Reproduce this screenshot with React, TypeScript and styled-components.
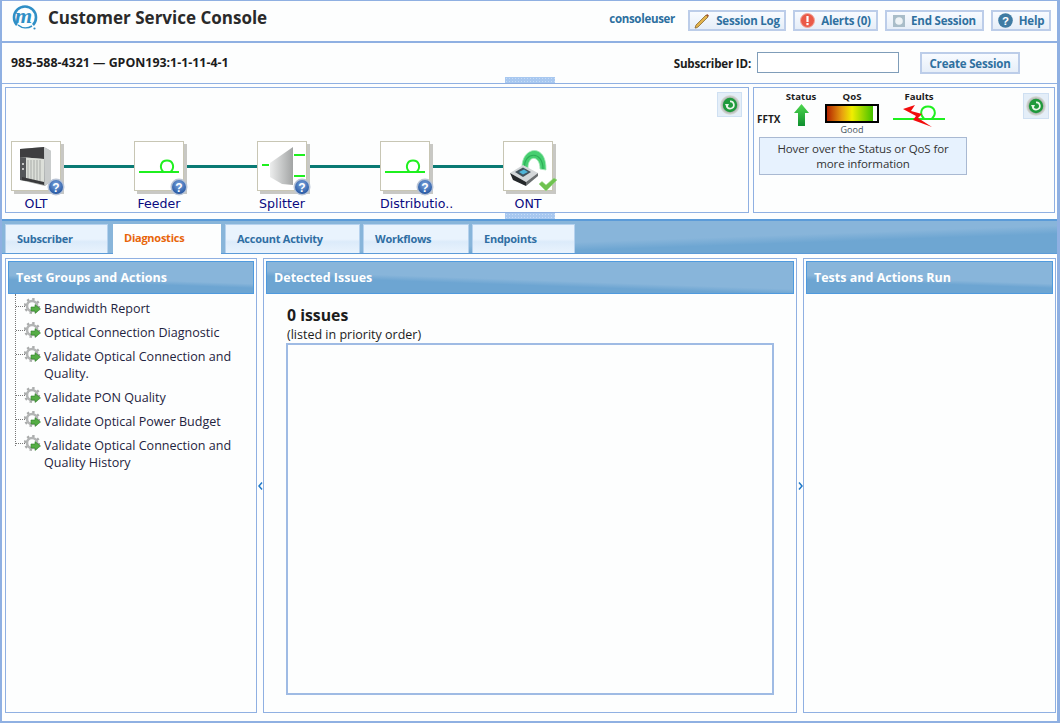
import React from 'react';
import styled, { createGlobalStyle } from 'styled-components';

const GlobalStyle = createGlobalStyle`
  html, body { margin: 0; padding: 0; background: #fdfefe; }
  body { font-family: "Open Sans", "Noto Sans", "Liberation Sans", sans-serif; }
  * { box-sizing: border-box; }
`;

const BLUE = '#8fb0e2';

const Loop = () => (
  <svg width="42" height="20" viewBox="0 0 42 20" fill="none" stroke="#1ff01f" strokeWidth="2">
    <path d="M1 16 H41" />
    <path d="M25 15.5 C21 11 23 4.5 29 4.5 C35 4.5 37 11 33 15.5" />
  </svg>
);

const HelpBadge = ({ id }: { id: string }) => (
  <svg width="18" height="18" viewBox="0 0 18 18">
    <defs>
      <radialGradient id={id} cx="0.5" cy="0.35" r="0.7">
        <stop offset="0" stopColor="#7fa8e0" />
        <stop offset="1" stopColor="#1d4f9c" />
      </radialGradient>
    </defs>
    <circle cx="9" cy="9" r="8.5" fill="#b9c4d6" />
    <circle cx="9" cy="9" r="7" fill={`url(#${id})`} />
    <text x="9" y="13.5" textAnchor="middle" fontSize="12" fontWeight="700" fill="#fff" fontFamily="Liberation Sans, sans-serif">?</text>
  </svg>
);

const CheckBadge = () => (
  <svg width="20" height="16" viewBox="0 0 20 16">
    <path d="M1 7 L4 4.5 L8 8 L16 1 L19 3 L8 14 Z" fill="#6fc24f" stroke="#9ad98a" strokeWidth="0.6" />
  </svg>
);

const OltIcon = () => (
  <svg width="34" height="44" viewBox="0 0 34 44">
    <path d="M1 5 L25 3 L32 7 V37 L26 42 L1 36 Z" fill="#a9adad" />
    <path d="M25 3 L32 7 V37 L26 42 Z" fill="#c9cccc" />
    <path d="M1 5 L25 3 V15 L1 13 Z" fill="#3e3e40" />
    <path d="M1 13 L25 15 V41 L1 36 Z" fill="#dcdfd9" />
    <path d="M1 13 L7 13.6 V37 L1 36 Z" fill="#55575a" />
    {[9, 12, 15, 18, 21].map((x) => (
      <path key={x} d={`M${x} 16 V37`} stroke="#a8aba8" strokeWidth="1" />
    ))}
    <path d="M3 33 L25 38 V41 L3 36 Z" fill="#3a3a3c" />
    <circle cx="4" cy="20" r="1" fill="#e8e8e8" />
    <circle cx="4" cy="25" r="1" fill="#e8e8e8" />
  </svg>
);

const SplitterIcon = () => (
  <svg width="46" height="44" viewBox="0 0 46 44">
    <defs>
      <linearGradient id="splitterBody" x1="0" x2="1" y1="0" y2="0">
        <stop offset="0" stopColor="#eceded" />
        <stop offset="1" stopColor="#a2a4a4" />
      </linearGradient>
    </defs>
    <path d="M3 21 H10" stroke="#1ff01f" strokeWidth="2" />
    <path d="M11 19 L34 3 V41 L23 40 L11 33 Z" fill="url(#splitterBody)" />
    <path d="M35 11 H46 M35 32 H46" stroke="#1ff01f" strokeWidth="2" />
  </svg>
);

const OntIcon = () => (
  <svg width="46" height="42" viewBox="0 0 46 42">
    <path d="M17 25 C15 1 42 -3 41 25 L35 24 C35 10 23 10 23 23 Z" fill="#46cf70" stroke="#a4e6b6" strokeWidth="0.8" />
    <path d="M19.5 22 C19 7 38 5 38 24" fill="none" stroke="#2fae58" strokeWidth="1.2" />
    <path d="M5 28 L18 20 L33 28 L21 37 Z" fill="#d4d7d9" />
    <path d="M5 28 L21 37 V41 L8 35 Z" fill="#25282b" />
    <path d="M21 37 L33 28 V31 L21 41 Z" fill="#6a6e70" />
    <path d="M10 27 L18 22.5 L26 27 L18 32 Z" fill="#43525c" />
    <path d="M14 27 L19 24.5 L23 27 L18 29.5 Z" fill="#4fb5d8" />
  </svg>
);

const Refresh = () => (
  <svg width="20" height="20" viewBox="0 0 20 20">
    <defs>
      <radialGradient id="refreshRing">
        <stop offset="0.6" stopColor="#9aa09c" />
        <stop offset="1" stopColor="#dfe2e0" />
      </radialGradient>
    </defs>
    <circle cx="10" cy="10" r="10" fill="url(#refreshRing)" />
    <circle cx="10" cy="10" r="7.2" fill="#1f9a3c" />
    <path d="M6.8 11 A3.6 3.6 0 1 0 10 6.4" fill="none" stroke="#eaf6ea" strokeWidth="1.7" />
    <path d="M5 9 L9 9 L7 13 Z" fill="#eaf6ea" />
  </svg>
);

const Gear = () => (
  <svg width="17" height="17" viewBox="0 0 17 17">
    <circle cx="8" cy="8" r="5" fill="none" stroke="#b3b5b5" strokeWidth="2.6" />
    <circle cx="8" cy="8" r="7" fill="none" stroke="#a9abab" strokeWidth="2.2" strokeDasharray="2.4 3.1" />
    <path d="M7 9 H11 V6.6 L16.5 11 L11 15.4 V13 H7 Z" fill="#55ad45" stroke="#2f7d2a" strokeWidth="0.6" />
  </svg>
);

const Pencil = () => (
  <svg width="16" height="16" viewBox="0 0 16 16">
    <path d="M2 15 L1 15 L2 12 L12 2 L14 4 L4 14 Z" fill="#e2b34c" stroke="#7d5a1f" strokeWidth="0.7" />
    <path d="M12 2 L13.2 1 L15 2.8 L14 4 Z" fill="#a0522d" />
  </svg>
);

const AlertIcon = () => (
  <svg width="15" height="15" viewBox="0 0 15 15">
    <circle cx="7.5" cy="7.5" r="7" fill="#ea5a48" stroke="#f2a79b" />
    <rect x="6.4" y="3" width="2.2" height="6" fill="#fff" />
    <rect x="6.4" y="10" width="2.2" height="2.2" fill="#fff" />
  </svg>
);

const EndIcon = () => (
  <svg width="12" height="12" viewBox="0 0 12 12">
    <rect width="12" height="12" fill="#a9bdc9" />
    <circle cx="6" cy="6" r="3.8" fill="#eef3f6" />
  </svg>
);

const HelpIcon = () => (
  <svg width="15" height="15" viewBox="0 0 15 15">
    <circle cx="7.5" cy="7.5" r="7.3" fill="#3f7ba3" />
    <text x="7.5" y="11.7" textAnchor="middle" fontSize="11.5" fontWeight="700" fill="#fff" fontFamily="Liberation Sans, sans-serif">?</text>
  </svg>
);

const UpArrow = () => (
  <svg width="15" height="22" viewBox="0 0 15 22">
    <defs>
      <linearGradient id="upArrow" x1="0" x2="0" y1="0" y2="1">
        <stop offset="0" stopColor="#4fd84f" />
        <stop offset="1" stopColor="#0f8f2f" />
      </linearGradient>
    </defs>
    <path d="M7.5 0 L15 9 H11 V22 H4 V9 H0 Z" fill="url(#upArrow)" />
  </svg>
);

const FaultIcon = () => (
  <svg width="52" height="24" viewBox="0 0 52 24" fill="none">
    <path d="M0 15 H52" stroke="#1ff01f" strokeWidth="2" />
    <path d="M31 14.5 C26 10 28 2.5 35 2.5 C42 2.5 44 10 39 14.5" stroke="#1ff01f" strokeWidth="2" />
    <path d="M10 5 L22 1 L18 7 L29 10 L25 14 L39 23 L20 16 L23 12 Z" fill="#f20d0d" />
  </svg>
);

const Logo = () => (
  <LogoBox>
    <svg width="26" height="26" viewBox="0 0 26 26">
      <path d="M5 21 A11 11 0 1 1 21 21" fill="none" stroke="#2f8fc6" strokeWidth="2.6" />
      <path d="M6 21 A12 12 0 0 0 20 22" fill="none" stroke="#2f8fc6" strokeWidth="1.6" />
      <circle cx="22.5" cy="24.5" r="1.1" fill="#2f8fc6" />
    </svg>
    <LogoLetter>m</LogoLetter>
  </LogoBox>
);

const nodes = [
  { name: 'OLT', art: <OltIcon />, badge: 'help' },
  { name: 'Feeder', art: <Loop />, badge: 'help' },
  { name: 'Splitter', art: <SplitterIcon />, badge: 'help' },
  { name: 'Distributio..', art: <Loop />, badge: 'help' },
  { name: 'ONT', art: <OntIcon />, badge: 'ok' },
];

const testActions = [
  'Bandwidth Report',
  'Optical Connection Diagnostic',
  'Validate Optical Connection and Quality.',
  'Validate PON Quality',
  'Validate Optical Power Budget',
  'Validate Optical Connection and Quality History',
];

const tabs = [
  { name: 'Subscriber', width: 103, gap: 0 },
  { name: 'Diagnostics', width: 108, gap: 5, active: true },
  { name: 'Account Activity', width: 135, gap: 4 },
  { name: 'Workflows', width: 106, gap: 3 },
  { name: 'Endpoints', width: 103, gap: 3 },
];

const App: React.FC = () => {
  return (
    <Page>
      <GlobalStyle />
      <Header>
        <Logo />
        <Title>Customer Service Console</Title>
        <UserName>consoleuser</UserName>
        <HeaderButton $width={98}><Pencil />Session Log</HeaderButton>
        <HeaderButton $width={85}><AlertIcon />Alerts (0)</HeaderButton>
        <HeaderButton $width={99}><EndIcon />End Session</HeaderButton>
        <HeaderButton $width={60}><HelpIcon />Help</HeaderButton>
      </Header>

      <SubscriberBar>
        <CircuitText>985-588-4321 — GPON193:1-1-11-4-1</CircuitText>
        <SubscriberLabel>Subscriber ID:</SubscriberLabel>
        <SubscriberInput />
        <CreateButton>Create Session</CreateButton>
        <GripBottom />
      </SubscriberBar>

      <MapArea>
        <MapPanel>
          <RefreshRow>
            <RefreshButton><Refresh /></RefreshButton>
          </RefreshRow>
          <NodeRow>
            {nodes.map((n, i) => (
              <React.Fragment key={n.name}>
                {i > 0 && <Connector />}
                <Node>
                  <NodeCard>
                    {n.art}
                    <NodeBadge $ok={n.badge === 'ok'}>
                      {n.badge === 'ok' ? <CheckBadge /> : <HelpBadge id={`badge${i}`} />}
                    </NodeBadge>
                  </NodeCard>
                  <NodeLabel>{n.name}</NodeLabel>
                </Node>
              </React.Fragment>
            ))}
          </NodeRow>
        </MapPanel>
        <StatusPanel>
          <StatusSummary>
            <StatusRow>
              <Fftx>FFTX</Fftx>
              <StatusColumn $width={44} $after={2}>
                <StatusHead>Status</StatusHead>
                <UpArrow />
              </StatusColumn>
              <StatusColumn $width={54} $after={14}>
                <StatusHead>QoS</StatusHead>
                <QosBar />
                <QosText>Good</QosText>
              </StatusColumn>
              <StatusColumn $width={52} $after={0}>
                <StatusHead>Faults</StatusHead>
                <FaultIcon />
              </StatusColumn>
            </StatusRow>
            <HoverHint>Hover over the Status or QoS for more information</HoverHint>
          </StatusSummary>
          <RefreshButton $large><Refresh /></RefreshButton>
        </StatusPanel>
        <GripBottom />
      </MapArea>

      <TabStrip>
        {tabs.map((t) => (
          <Tab key={t.name} $width={t.width} $gap={t.gap} $active={t.active}>{t.name}</Tab>
        ))}
      </TabStrip>

      <Columns>
        <Panel $width={252}>
          <PanelHead>Test Groups and Actions</PanelHead>
          <Tree>
            {testActions.map((a) => (
              <TreeItem key={a}>
                <TreeIcon><Gear /></TreeIcon>
                <span>{a}</span>
              </TreeItem>
            ))}
          </Tree>
        </Panel>
        <Gutter>
          <svg width="5" height="8" viewBox="0 0 5 8"><path d="M4 0.5 L1 4 L4 7.5" fill="none" stroke="#1f78c8" strokeWidth="1.5" /></svg>
        </Gutter>
        <CenterPanel>
          <PanelHead>Detected Issues</PanelHead>
          <IssuesBody>
            <IssueCount>0 issues</IssueCount>
            <IssueNote>(listed in priority order)</IssueNote>
            <IssueList />
          </IssuesBody>
        </CenterPanel>
        <Gutter>
          <svg width="5" height="8" viewBox="0 0 5 8"><path d="M1 0.5 L4 4 L1 7.5" fill="none" stroke="#1f78c8" strokeWidth="1.5" /></svg>
        </Gutter>
        <Panel $width={253}>
          <PanelHead>Tests and Actions Run</PanelHead>
        </Panel>
      </Columns>
    </Page>
  );
};

export default App;

const Page = styled.div`
  width: 1060px;
  height: 723px;
  display: flex;
  flex-direction: column;
  overflow: hidden;
  color: #1c1c1c;
  background: #fdfefe;
  border-style: solid;
  border-color: ${BLUE};
  border-width: 1px 3px 2px 2px;
`;

const Header = styled.div`
  height: 42px;
  flex: none;
  display: flex;
  align-items: flex-start;
  padding: 0 6px 0 10px;
  border-bottom: 2px solid ${BLUE};
`;

const LogoBox = styled.div`
  position: relative;
  width: 26px;
  height: 26px;
  margin: 3px 10px 0 0;
`;

const LogoLetter = styled.span`
  position: absolute;
  left: 3px;
  top: -1px;
  font: italic 700 22px "Liberation Serif", serif;
  color: #2f8fc6;
`;

const Title = styled.div`
  flex: 1;
  margin-top: 5px;
  font-size: 17px;
  line-height: 24px;
  font-weight: 700;
  color: #2a2a2a;
`;

const UserName = styled.div`
  margin: 9px 6px 0 0;
  font-size: 11.5px;
  line-height: 18px;
  letter-spacing: -0.3px;
  font-weight: 700;
  color: #2c6f9f;
`;

const HeaderButton = styled.div<{ $width: number }>`
  width: ${(p) => p.$width}px;
  height: 21px;
  margin: 9px 0 0 7px;
  display: flex;
  align-items: center;
  justify-content: center;
  gap: 6px;
  border: 2px solid #bccde9;
  background: linear-gradient(#f8fbff, #e6eef8);
  font-size: 11.5px;
  letter-spacing: -0.2px;
  font-weight: 700;
  color: #2f709f;
`;

const SubscriberBar = styled.div`
  position: relative;
  height: 41px;
  flex: none;
  display: flex;
  align-items: flex-start;
  padding: 9px 37px 0 9px;
  border-bottom: 1px solid ${BLUE};
`;

const CircuitText = styled.div`
  flex: 1;
  margin-top: 1px;
  font-size: 12.4px;
  font-weight: 700;
  line-height: 20px;
`;

const SubscriberLabel = styled.div`
  margin: 3px 6px 0 0;
  font-size: 11.6px;
  letter-spacing: -0.2px;
  font-weight: 700;
  line-height: 18px;
`;

const SubscriberInput = styled.div`
  width: 142px;
  height: 21px;
  border: 1px solid #7f9db9;
  background: #fff;
`;

const CreateButton = styled.div`
  width: 100px;
  height: 22px;
  margin-left: 21px;
  border: 2px solid #bccde9;
  background: linear-gradient(#f8fbff, #e6eef8);
  font-size: 11.5px;
  letter-spacing: -0.2px;
  font-weight: 700;
  color: #2f709f;
  display: flex;
  align-items: center;
  justify-content: center;
`;

const GripBottom = styled.div`
  position: absolute;
  left: 503px;
  bottom: 0;
  width: 50px;
  height: 6px;
  background-color: #a8c8f0;
  background-image: radial-gradient(#c6dcf6 1px, transparent 1px);
  background-size: 3px 3px;
`;

const MapArea = styled.div`
  position: relative;
  height: 137px;
  flex: none;
  display: flex;
  gap: 4px;
  padding: 3px 2px 0 3px;
  border-bottom: 2px solid #5b9bd8;
`;

const MapPanel = styled.div`
  width: 744px;
  height: 126px;
  border: 1px solid ${BLUE};
  padding: 4px 6px 0 5px;
`;

const RefreshRow = styled.div`
  display: flex;
  justify-content: flex-end;
`;

const RefreshButton = styled.div<{ $large?: boolean }>`
  width: ${(p) => (p.$large ? 26 : 25)}px;
  height: ${(p) => (p.$large ? 26 : 25)}px;
  flex: none;
  display: flex;
  align-items: center;
  justify-content: center;
  background: #e4eef8;
  border: 1px solid #cfe0f2;
  margin-top: ${(p) => (p.$large ? 2 : 0)}px;
`;

const NodeRow = styled.div`
  display: flex;
  align-items: flex-start;
  margin-top: 24px;
`;

const Node = styled.div`
  width: 50px;
  flex: none;
  display: flex;
  flex-direction: column;
  align-items: center;
`;

const NodeCard = styled.div`
  position: relative;
  width: 50px;
  height: 50px;
  display: flex;
  align-items: center;
  justify-content: center;
  background: #fff;
  border: 1px solid #c8c6b4;
  box-shadow: 3px 3px 0 #c8c8c4;
`;

const NodeBadge = styled.div<{ $ok?: boolean }>`
  position: absolute;
  right: ${(p) => (p.$ok ? -6 : -5)}px;
  bottom: ${(p) => (p.$ok ? -3 : -6)}px;
  display: flex;
`;

const NodeLabel = styled.div`
  margin-top: 5px;
  font: 12.6px "DejaVu Sans", sans-serif;
  color: #0a0a80;
  white-space: nowrap;
  line-height: 16px;
  display: flex;
  justify-content: safe center;
  width: 50px;
`;

const Connector = styled.div`
  width: 70px;
  height: 3px;
  flex: none;
  margin: 24px 0 0 3px;
  background: #0a7a74;
`;

const StatusPanel = styled.div`
  flex: 1;
  height: 126px;
  display: flex;
  justify-content: space-between;
  border: 1px solid ${BLUE};
  padding: 3px 5px 0 3px;
`;

const StatusSummary = styled.div`
  width: 212px;
`;

const StatusRow = styled.div`
  display: flex;
  height: 45px;
`;

const Fftx = styled.div`
  width: 22px;
  margin-top: 21px;
  font-size: 10px;
  font-weight: 700;
`;

const StatusColumn = styled.div<{ $width: number; $after: number }>`
  width: ${(p) => p.$width}px;
  margin-right: ${(p) => p.$after}px;
  display: flex;
  flex-direction: column;
  align-items: center;
`;

const StatusHead = styled.div`
  font-size: 9.6px;
  font-weight: 700;
  line-height: 12px;
  margin-bottom: 1px;
`;

const QosBar = styled.div`
  width: 54px;
  height: 19px;
  border: 2px solid #000;
  background: linear-gradient(90deg, #b32400, #e8a010 30%, #f0ee00 50%, #3fc000 93%, #fff 93%);
`;

const QosText = styled.div`
  margin-top: 1px;
  font-size: 9px;
  line-height: 12px;
  color: #44505c;
`;

const HoverHint = styled.div`
  margin: 1px 0 0 2px;
  width: 208px;
  height: 38px;
  padding: 3px 10px;
  border: 1px solid #a9b9d2;
  background: #e7f2fe;
  font-size: 11.5px;
  letter-spacing: -0.1px;
  line-height: 15px;
  text-align: center;
  color: #333;
`;

const TabStrip = styled.div`
  height: 33px;
  flex: none;
  display: flex;
  align-items: flex-end;
  padding-left: 3px;
  border-bottom: 1px solid #5b9bd8;
  background: linear-gradient(178deg, #88b5da 60%, #6ea6d2 72%);
`;

const Tab = styled.div<{ $width: number; $gap: number; $active?: boolean }>`
  width: ${(p) => p.$width}px;
  height: ${(p) => (p.$active ? 30 : 29)}px;
  margin-left: ${(p) => p.$gap}px;
  margin-bottom: ${(p) => (p.$active ? -1 : 0)}px;
  padding: 0 0 ${(p) => (p.$active ? 3 : 2)}px 11px;
  display: flex;
  align-items: center;
  font-size: 11px;
  letter-spacing: -0.25px;
  font-weight: 700;
  color: ${(p) => (p.$active ? '#e8650a' : '#2f6ea3')};
  background: ${(p) => (p.$active ? '#fdfefe' : 'linear-gradient(#e9f3fd 50%, #dcebfa 60%, #e9f3fd)')};
  border: solid #b6d2ee;
  border-width: ${(p) => (p.$active ? '0' : '1px 1px 0 1px')};
`;

const Columns = styled.div`
  flex: 1;
  display: flex;
  padding: 4px 1px 8px 3px;
`;

const Panel = styled.div<{ $width: number }>`
  width: ${(p) => p.$width}px;
  flex: none;
  border: 1px solid ${BLUE};
  padding: 2px;
`;

const CenterPanel = styled.div`
  flex: 1;
  min-width: 0;
  border: 1px solid ${BLUE};
  padding: 2px;
`;

const Gutter = styled.div`
  width: 6px;
  flex: none;
  display: flex;
  align-items: center;
  justify-content: center;
`;

const PanelHead = styled.div`
  height: 33px;
  padding-left: 7px;
  display: flex;
  align-items: center;
  font-size: 12.5px;
  font-weight: 700;
  color: #fff;
  border: 1px solid #4f9ade;
  background: linear-gradient(182deg, #88b5da 55%, #6da5d2 66%);
`;

const Tree = styled.div`
  position: relative;
  margin-left: 7px;
  padding-top: 6px;
  border-left: 1px dotted #777;
  height: 152px;
  overflow: visible;
`;

const TreeItem = styled.div`
  position: relative;
  display: flex;
  padding: 0 16px 7px 28px;
  font-size: 12.55px;
  line-height: 17px;
  color: #1f2440;
  &::before {
    content: '';
    position: absolute;
    left: 0;
    top: 6px;
    width: 9px;
    border-top: 1px dotted #777;
  }
`;

const TreeIcon = styled.div`
  position: absolute;
  left: 8px;
  top: -2px;
  display: flex;
`;

const IssuesBody = styled.div`
  padding: 10px 20px 0 20px;
`;

const IssueCount = styled.div`
  padding-left: 1px;
  font-size: 15.8px;
  font-weight: 700;
  line-height: 22px;
`;

const IssueNote = styled.div`
  margin-top: 1px;
  padding-left: 1px;
  font-size: 12.5px;
  line-height: 16px;
`;

const IssueList = styled.div`
  width: 488px;
  height: 352px;
  border: 2px solid #9fbbe4;
  background: #fdfefe;
`;
